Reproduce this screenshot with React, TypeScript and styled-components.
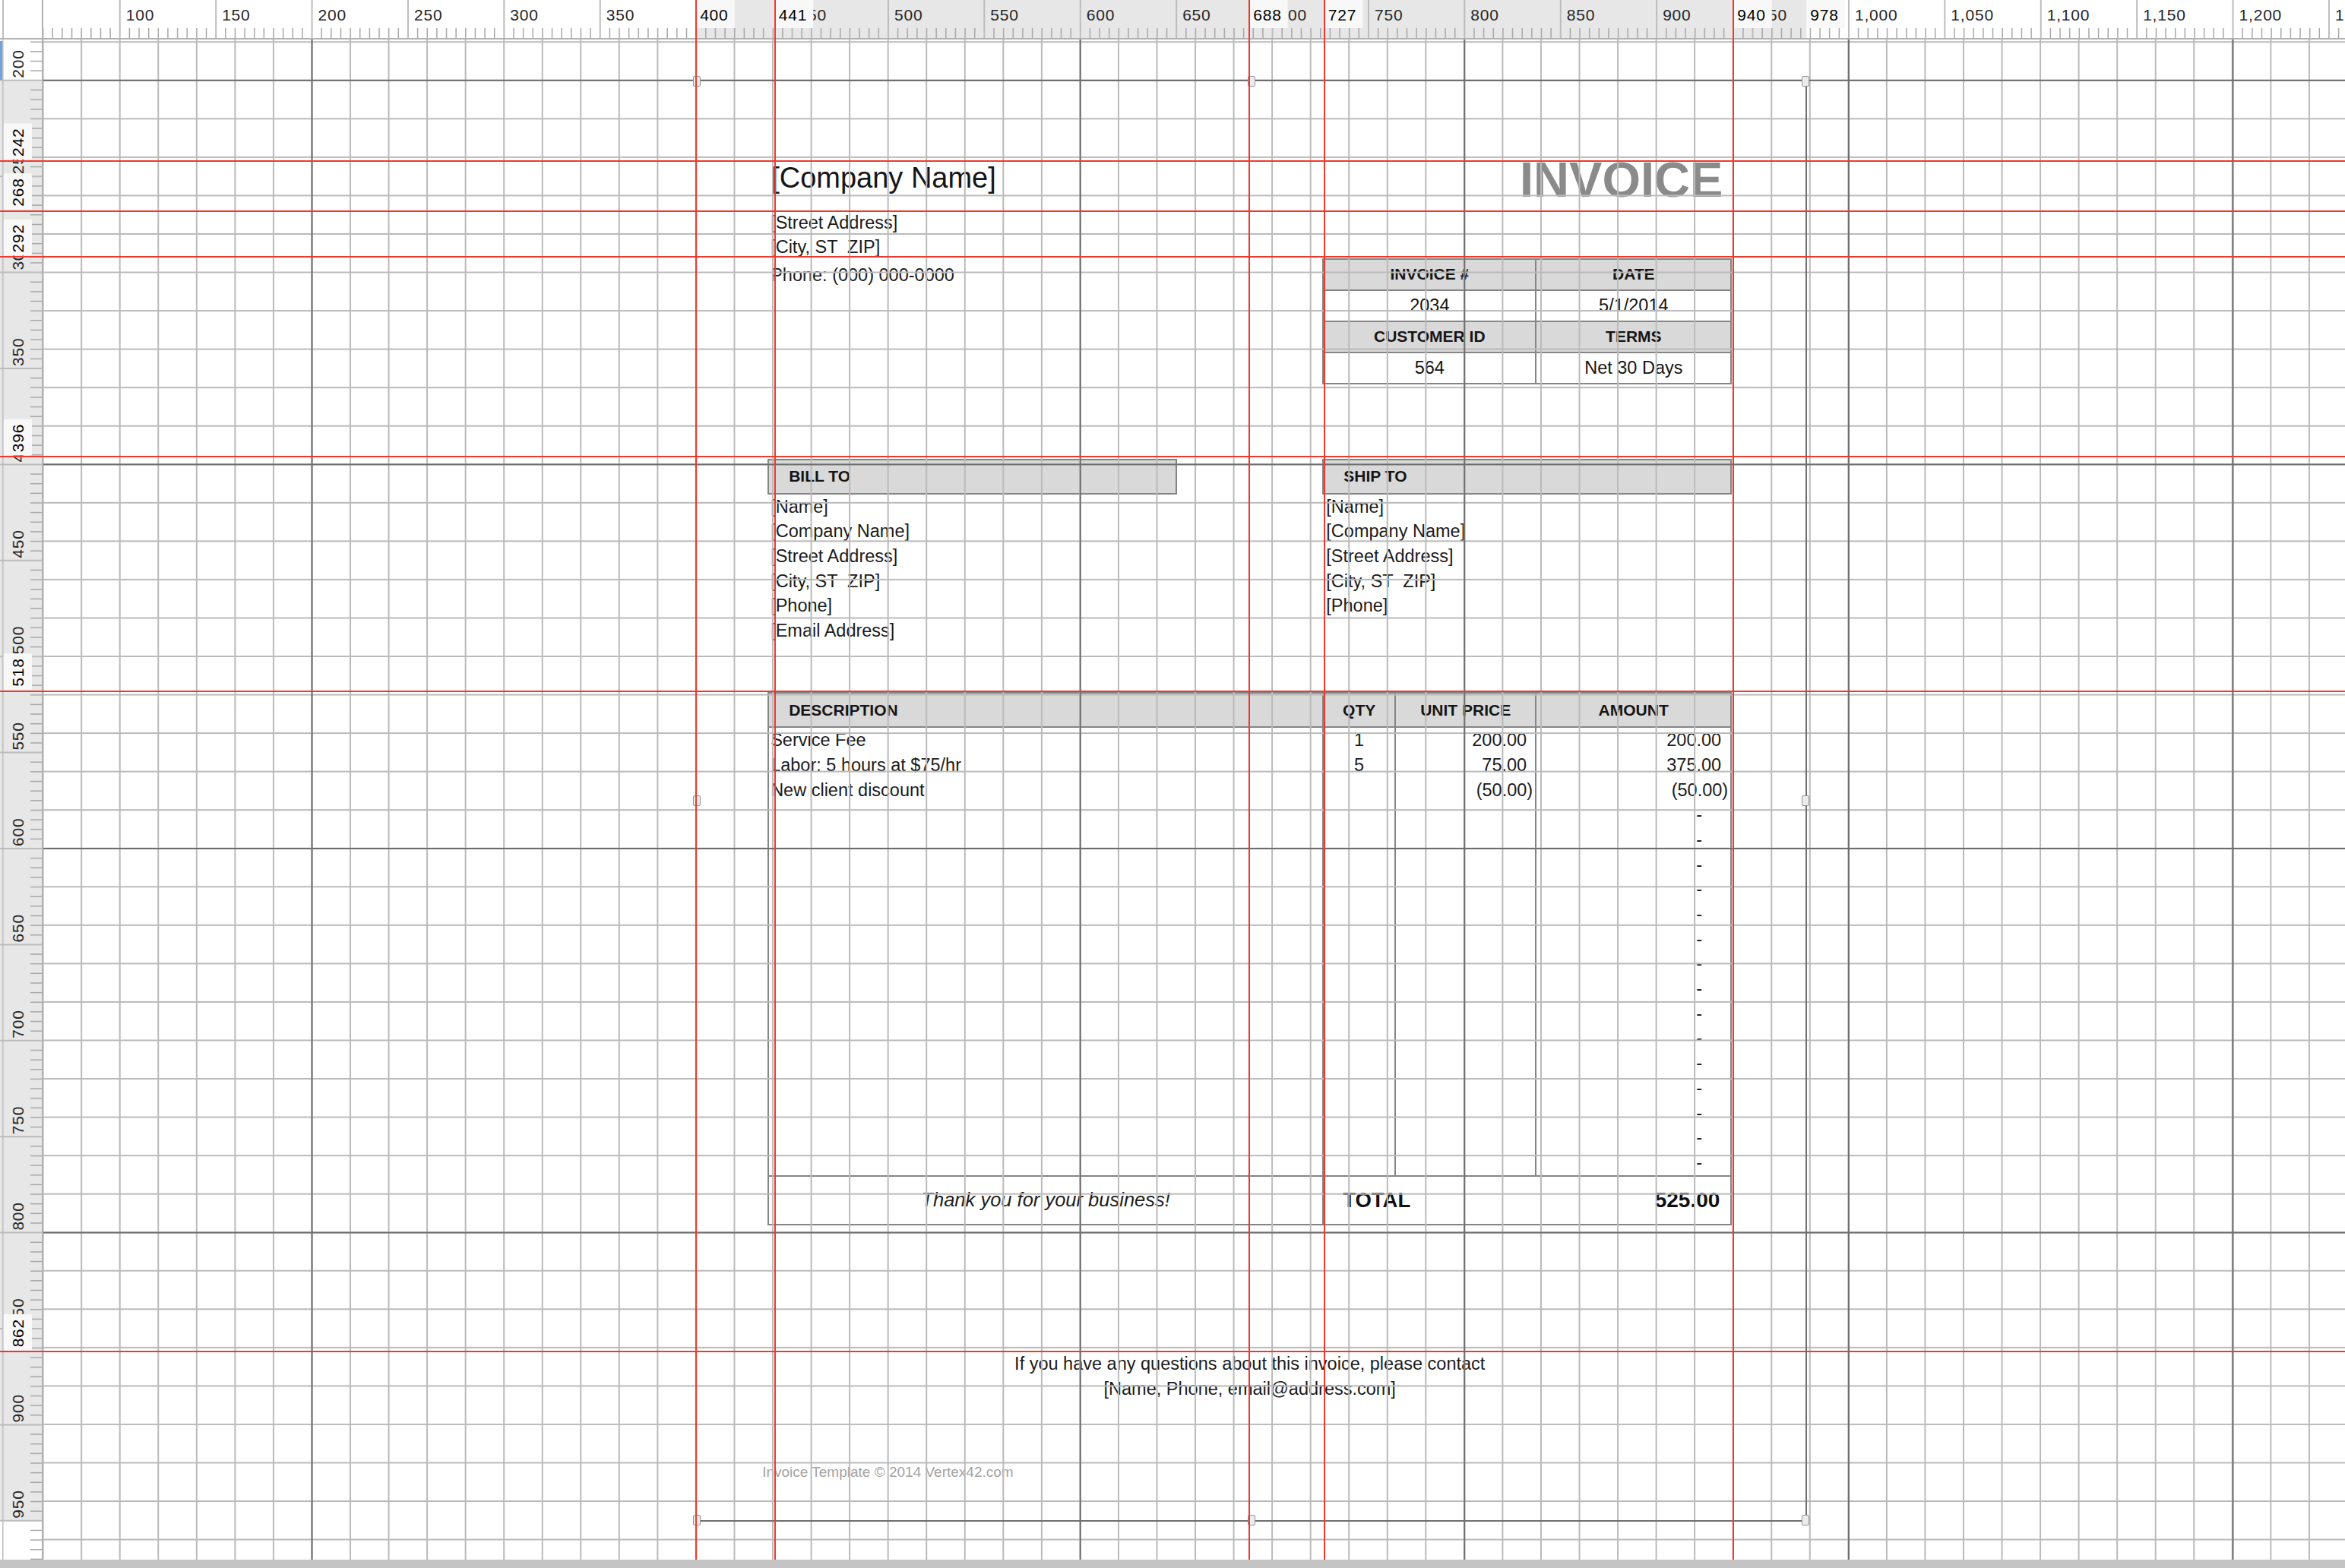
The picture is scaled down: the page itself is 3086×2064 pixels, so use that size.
import React from "react";
import styled, { createGlobalStyle } from "styled-components";

/* ---------- geometry of the design canvas ---------- */
const W = 3086;
const H = 2064;
const RULER_W = 57;
const RULER_H = 52;
const BAR_H = 11;
const S = 2.528; // screen px per ruler unit
const xu = (u: number) => 1019.8 + (u - 441) * S;
const yu = (u: number) => 212 + (u - 242) * S;
const mod = (a: number, m: number) => ((a % m) + m) % m;

const CANVAS_W = W - RULER_W;
const CANVAS_H = H - RULER_H - BAR_H;
const cx = (u: number) => xu(u) - RULER_W;
const cy = (u: number) => yu(u) - RULER_H;

const MINOR = 20 * S;
const MAJOR = 200 * S;
const minX = mod(cx(0) - 1, MINOR);
const majX = mod(cx(0) - 1, MAJOR);
const minY = mod(cy(0) - 1, MINOR);
const majY = mod(cy(0) - 1, MAJOR);

/* ruler label boxes (guides + selection extent) */
const V_MARKS = [400, 441, 688, 727, 940, 978];
const H_MARKS = [242, 268, 292, 396, 518, 862];
/* red guide lines actually drawn */
const V_GUIDES = [400, 441, 688, 727, 940];
const H_GUIDES = [242, 268, 292, 396, 518, 862];

const RED = "#f0392d";
const LINE = "#858585";
const HEAD_BG = "#d9d9d9";
const RULER_FONT = '"Liberation Sans", Arial, sans-serif';

const fmt = (u: number) => (u >= 1000 ? `${Math.floor(u / 1000)},${String(u % 1000).padStart(3, "0")}` : String(u));

/* ---------- global ---------- */
const GlobalStyle = createGlobalStyle`
  html, body { margin: 0; padding: 0; background: #ffffff; }
  body {
    width: ${W}px;
    height: ${H}px;
    overflow: hidden;
    font-family: "Liberation Sans", Arial, sans-serif;
  }
  #root { width: ${W}px; height: ${H}px; }
`;

/* ---------- window frame ---------- */
const Screen = styled.div`
  position: relative;
  width: ${W}px;
  height: ${H}px;
  display: grid;
  grid-template-columns: ${RULER_W}px 1fr;
  grid-template-rows: ${RULER_H}px 1fr ${BAR_H}px;
  overflow: hidden;
  background: #ffffff;
`;

const Corner = styled.div`
  box-sizing: border-box;
  border-right: 2px solid #b3b3b3;
  border-bottom: 2px solid #b3b3b3;
  background: linear-gradient(to right, transparent 3px, #bdbdbd 3px, #bdbdbd 4.5px, transparent 4.5px), #ffffff;
`;

const TopRuler = styled.div`
  overflow: hidden;
  background: #ffffff;
  & > svg { display: block; }
`;

const LeftRuler = styled.div`
  overflow: hidden;
  background: #ffffff;
  & > svg { display: block; }
`;

const Canvas = styled.main`
  position: relative;
  overflow: hidden;
  background: #ffffff;
`;

const BottomBar = styled.div`
  grid-column: 1 / -1;
  background: #c4c4c4;
`;

const GridOverlay = styled.div`
  position: absolute;
  inset: 0;
  pointer-events: none;
  background-image:
    linear-gradient(to right, #6d6d6d 0, #6d6d6d 2px, transparent 2px),
    linear-gradient(to bottom, #6d6d6d 0, #6d6d6d 2px, transparent 2px),
    linear-gradient(to right, #bababa 0, #bababa 2px, transparent 2px),
    linear-gradient(to bottom, #bababa 0, #bababa 2px, transparent 2px);
  background-size: ${MAJOR}px 100%, 100% ${MAJOR}px, ${MINOR}px 100%, 100% ${MINOR}px;
  background-position: ${majX}px 0, 0 ${majY}px, ${minX}px 0, 0 ${minY}px;
`;

const VGuide = styled.div<{ $x: number }>`
  position: absolute;
  top: 0;
  bottom: ${BAR_H}px;
  left: ${(p) => p.$x - 1}px;
  width: 2px;
  background: ${RED};
  pointer-events: none;
`;

const HGuide = styled.div<{ $y: number }>`
  position: absolute;
  left: 0;
  right: 0;
  top: ${(p) => p.$y - 1}px;
  height: 2px;
  background: ${RED};
  pointer-events: none;
`;

const Selection = styled.div`
  position: absolute;
  left: ${cx(400) - 1}px;
  top: ${cy(200) - 1}px;
  width: ${xu(978) - xu(400) + 2}px;
  height: ${yu(950) - yu(200) + 2}px;
  box-sizing: border-box;
  border: 2px solid #6f6f6f;
  pointer-events: none;
`;

const Handle = styled.span<{ $x: number; $y: number }>`
  position: absolute;
  left: ${(p) => p.$x}%;
  top: ${(p) => p.$y}%;
  width: 10px;
  height: 14px;
  box-sizing: border-box;
  transform: translate(-50%, -50%);
  background: #ececec;
  border: 1.5px solid #959595;
  border-radius: 2px;
`;

/* ---------- rulers (drawings) ---------- */
const TopRulerDrawing: React.FC = () => {
  const ticks: React.ReactNode[] = [];
  for (let u = 25; u <= 1265; u += 5) {
    const x = cx(u);
    if (x < -2 || x > CANVAS_W + 2) continue;
    if (u % 50 === 0) {
      ticks.push(<line key={`m${u}`} x1={x} x2={x} y1={0} y2={RULER_H} stroke="#bcbcbc" strokeWidth={2} />);
    } else {
      ticks.push(<line key={`t${u}`} x1={x} x2={x} y1={37} y2={RULER_H} stroke="#a8a8a8" strokeWidth={1.5} />);
    }
  }
  const labels: React.ReactNode[] = [];
  for (let u = 100; u <= 1250; u += 50) {
    labels.push(
      <text key={`l${u}`} x={cx(u) + 8} y={27} fill="#262626">
        {fmt(u)}
      </text>
    );
  }
  const boxes = V_MARKS.map((g) => {
    const x = cx(g);
    const t = String(g);
    const w = t.length * 12.5 + 12;
    return (
      <g key={`g${g}`}>
        <rect x={x + 1} y={0} width={w} height={37} fill="#f8f8f8" />
        <text x={x + 5} y={27} fill="#000000">
          {t}
        </text>
      </g>
    );
  });
  return (
    <svg width={CANVAS_W} height={RULER_H} fontFamily={RULER_FONT} fontSize={21} letterSpacing={0.8}>
      <rect x={cx(400)} y={0} width={cx(978) - cx(400)} height={RULER_H} fill="#e7e7e7" />
      {ticks}
      {labels}
      {boxes}
      <line x1={0} x2={CANVAS_W} y1={RULER_H - 1} y2={RULER_H - 1} stroke="#b2b2b2" strokeWidth={2} />
    </svg>
  );
};

const LeftRulerDrawing: React.FC = () => {
  const h = CANVAS_H;
  const ticks: React.ReactNode[] = [];
  for (let u = 160; u <= 1000; u += 5) {
    const y = cy(u);
    if (y < -2 || y > h + 2) continue;
    if (u % 50 === 0) {
      ticks.push(<line key={`m${u}`} x1={0} x2={RULER_W} y1={y} y2={y} stroke="#bcbcbc" strokeWidth={2} />);
    } else {
      ticks.push(<line key={`t${u}`} x1={40} x2={RULER_W} y1={y} y2={y} stroke="#a8a8a8" strokeWidth={1.5} />);
    }
  }
  const labels: React.ReactNode[] = [];
  for (let u = 200; u <= 950; u += 50) {
    const y = cy(u) - 3;
    labels.push(
      <text key={`l${u}`} x={31} y={y} transform={`rotate(-90 31 ${y})`} fill="#262626">
        {fmt(u)}
      </text>
    );
  }
  const boxes = H_MARKS.map((g) => {
    const y = cy(g);
    const t = String(g);
    const len = t.length * 12.5 + 10;
    const ty = y - 6;
    return (
      <g key={`g${g}`}>
        <rect x={4} y={y - 2 - len} width={38} height={len} fill="#f8f8f8" />
        <text x={31} y={ty} transform={`rotate(-90 31 ${ty})`} fill="#000000">
          {t}
        </text>
      </g>
    );
  });
  return (
    <svg width={RULER_W} height={h} fontFamily={RULER_FONT} fontSize={21} letterSpacing={0.8}>
      <rect x={0} y={cy(200)} width={RULER_W} height={cy(950) - cy(200)} fill="#e7e7e7" />
      {ticks}
      {labels}
      {boxes}
      <rect x={0} y={2} width={3} height={51} fill="#6fa2de" />
      <line x1={3.8} x2={3.8} y1={0} y2={h} stroke="#bdbdbd" strokeWidth={1.5} />
      <line x1={RULER_W - 1} x2={RULER_W - 1} y1={0} y2={h} stroke="#b2b2b2" strokeWidth={2} />
    </svg>
  );
};

/* ---------- invoice page ---------- */
const Page = styled.section`
  position: absolute;
  left: ${cx(400)}px;
  top: ${cy(200)}px;
  width: ${xu(978) - xu(400)}px;
  height: ${yu(950) - yu(200)}px;
  box-sizing: border-box;
  padding: 99px 98px 0 94px;
  display: flex;
  flex-direction: column;
  color: #1b1b1b;
  font-family: "Liberation Sans", Arial, sans-serif;
  font-size: 23.5px;
`;

const TopSection = styled.header`
  display: flex;
  justify-content: space-between;
  align-items: flex-start;
`;

const LeftHead = styled.div`
  display: flex;
  flex-direction: column;
`;

const CompanyName = styled.div`
  margin-top: 6px;
  padding-left: 5px;
  font-size: 38px;
  line-height: 46px;
  color: #161616;
`;

const Address = styled.div`
  margin-top: 20px;
  padding-left: 4px;
  display: flex;
  flex-direction: column;
`;

const Line = styled.div<{ $gap?: number }>`
  line-height: 32.6px;
  margin-top: ${(p) => p.$gap ?? 0}px;
  white-space: pre;
`;

const RightHead = styled.div`
  width: 539px;
  display: flex;
  flex-direction: column;
`;

const Title = styled.h1`
  margin: 0;
  font-size: 65px;
  line-height: 63px;
  font-weight: 700;
  text-align: right;
  padding-right: 12px;
  color: #8a8a8a;
`;

const InfoTable = styled.div`
  margin-top: 72px;
  display: grid;
  grid-template-columns: 278px 1fr;
  gap: 2px;
  background: ${LINE};
  border: 2px solid ${LINE};
`;

const InfoCell = styled.div<{ $head?: boolean }>`
  height: 39px;
  display: flex;
  align-items: center;
  justify-content: center;
  background: ${(p) => (p.$head ? HEAD_BG : "#ffffff")};
  font-size: ${(p) => (p.$head ? "21px" : "23.5px")};
  font-weight: ${(p) => (p.$head ? 700 : 400)};
  color: #151515;
`;

const Parties = styled.div`
  margin-top: 98px;
  display: flex;
  justify-content: space-between;
`;

const PartyBlock = styled.div`
  width: 539px;
  display: flex;
  flex-direction: column;
`;

const PartyHeader = styled.div`
  height: 47px;
  box-sizing: border-box;
  border: 2px solid ${LINE};
  background: ${HEAD_BG};
  display: flex;
  align-items: center;
  padding-left: 26px;
  font-size: 21px;
  font-weight: 700;
  color: #151515;
`;

const PartyLines = styled.div<{ $indent: number }>`
  padding-left: ${(p) => p.$indent}px;
  display: flex;
  flex-direction: column;
`;

const COLS = "730px 95px 185px 255px";

const ItemsTable = styled.div`
  margin-top: 65px;
  border: 2px solid ${LINE};
  display: flex;
  flex-direction: column;
`;

const HeadRow = styled.div`
  display: grid;
  grid-template-columns: ${COLS};
  height: 45px;
  box-sizing: border-box;
  border-bottom: 2px solid ${LINE};
  background: ${HEAD_BG};
`;

const HeadCell = styled.div<{ $start?: boolean }>`
  display: flex;
  align-items: center;
  justify-content: ${(p) => (p.$start ? "flex-start" : "center")};
  padding-left: ${(p) => (p.$start ? 26 : 0)}px;
  font-size: 21px;
  font-weight: 700;
  color: #151515;
  border-right: 2px solid ${LINE};
  &:last-child { border-right: none; }
`;

const BodyRow = styled.div`
  display: grid;
  grid-template-columns: ${COLS};
  height: 32.7px;
`;

const BodyCell = styled.div<{ $justify: string; $padL?: number; $padR?: number }>`
  display: flex;
  align-items: center;
  justify-content: ${(p) => p.$justify};
  padding-left: ${(p) => p.$padL ?? 0}px;
  padding-right: ${(p) => p.$padR ?? 0}px;
  white-space: nowrap;
  overflow: hidden;
  border-right: 2px solid ${LINE};
  &:last-child { border-right: none; }
`;

const TotalRow = styled.div`
  display: grid;
  grid-template-columns: 730px 1fr;
  height: 64px;
  box-sizing: border-box;
  border-top: 2px solid ${LINE};
`;

const ThanksCell = styled.div`
  display: flex;
  align-items: center;
  justify-content: center;
  border-right: 2px solid ${LINE};
  font-style: italic;
  font-size: 25.5px;
  color: #1e1e1e;
`;

const TotalCell = styled.div`
  display: flex;
  align-items: center;
  justify-content: space-between;
  padding: 0 14px 0 25px;
  font-weight: 700;
  color: #111111;
`;

const TotalLabel = styled.span`
  font-size: 27.5px;
`;

const TotalValue = styled.span`
  font-size: 28px;
`;

const Contact = styled.div`
  margin-top: 166px;
  text-align: center;
  line-height: 33px;
  color: #1b1b1b;
`;

const Copyright = styled.div`
  margin-top: 82px;
  margin-left: -7px;
  font-size: 19px;
  line-height: 22px;
  color: #a3a3a3;
`;

/* ---------- data ---------- */
type Kind = "pos" | "neg" | "zero";
type Money = { text: string; kind: Kind };
type Item = { desc: string; qty: string; unit?: Money; amount: Money };

const items: Item[] = [
  { desc: "Service Fee", qty: "1", unit: { text: "200.00", kind: "pos" }, amount: { text: "200.00", kind: "pos" } },
  { desc: "Labor: 5 hours at $75/hr", qty: "5", unit: { text: "75.00", kind: "pos" }, amount: { text: "375.00", kind: "pos" } },
  { desc: "New client discount", qty: "", unit: { text: "(50.00)", kind: "neg" }, amount: { text: "(50.00)", kind: "neg" } },
  ...Array.from({ length: 15 }, () => ({ desc: "", qty: "", amount: { text: "-", kind: "zero" as Kind } })),
];

const unitPad: Record<Kind, number> = { pos: 11, neg: 3, zero: 37 };
const amountPad: Record<Kind, number> = { pos: 12, neg: 3, zero: 37 };

const billTo = ["[Name]", "[Company Name]", "[Street Address]", "[City, ST  ZIP]", "[Phone]", "[Email Address]"];
const shipTo = ["[Name]", "[Company Name]", "[Street Address]", "[City, ST  ZIP]", "[Phone]"];

const handles: Array<[number, number]> = [
  [0, 0], [50, 0], [100, 0],
  [0, 50], [100, 50],
  [0, 100], [50, 100], [100, 100],
];

/* ---------- component ---------- */
export default function App() {
  return (
    <>
      <GlobalStyle />
      <Screen>
        <Corner />
        <TopRuler>
          <TopRulerDrawing />
        </TopRuler>
        <LeftRuler>
          <LeftRulerDrawing />
        </LeftRuler>
        <Canvas>
          <Page>
            <TopSection>
              <LeftHead>
                <CompanyName>[Company Name]</CompanyName>
                <Address>
                  <Line>[Street Address]</Line>
                  <Line>[City, ST  ZIP]</Line>
                  <Line $gap={4}>Phone: (000) 000-0000</Line>
                </Address>
              </LeftHead>
              <RightHead>
                <Title>INVOICE</Title>
                <InfoTable>
                  <InfoCell $head>INVOICE #</InfoCell>
                  <InfoCell $head>DATE</InfoCell>
                  <InfoCell>2034</InfoCell>
                  <InfoCell>5/1/2014</InfoCell>
                  <InfoCell $head>CUSTOMER ID</InfoCell>
                  <InfoCell $head>TERMS</InfoCell>
                  <InfoCell>564</InfoCell>
                  <InfoCell>Net 30 Days</InfoCell>
                </InfoTable>
              </RightHead>
            </TopSection>

            <Parties>
              <PartyBlock>
                <PartyHeader>BILL TO</PartyHeader>
                <PartyLines $indent={4}>
                  {billTo.map((t, i) => (
                    <Line key={i}>{t}</Line>
                  ))}
                </PartyLines>
              </PartyBlock>
              <PartyBlock>
                <PartyHeader>SHIP TO</PartyHeader>
                <PartyLines $indent={5}>
                  {shipTo.map((t, i) => (
                    <Line key={i}>{t}</Line>
                  ))}
                </PartyLines>
              </PartyBlock>
            </Parties>

            <ItemsTable>
              <HeadRow>
                <HeadCell $start>DESCRIPTION</HeadCell>
                <HeadCell>QTY</HeadCell>
                <HeadCell>UNIT PRICE</HeadCell>
                <HeadCell>AMOUNT</HeadCell>
              </HeadRow>
              {items.map((it, i) => (
                <BodyRow key={i}>
                  <BodyCell $justify="flex-start" $padL={2}>{it.desc}</BodyCell>
                  <BodyCell $justify="center">{it.qty}</BodyCell>
                  <BodyCell $justify="flex-end" $padR={it.unit ? unitPad[it.unit.kind] : 0}>
                    {it.unit ? it.unit.text : ""}
                  </BodyCell>
                  <BodyCell $justify="flex-end" $padR={amountPad[it.amount.kind]}>
                    {it.amount.text}
                  </BodyCell>
                </BodyRow>
              ))}
              <TotalRow>
                <ThanksCell>Thank you for your business!</ThanksCell>
                <TotalCell>
                  <TotalLabel>TOTAL</TotalLabel>
                  <TotalValue>525.00</TotalValue>
                </TotalCell>
              </TotalRow>
            </ItemsTable>

            <Contact>
              <div>If you have any questions about this invoice, please contact</div>
              <div>[Name, Phone, email@address.com]</div>
            </Contact>
            <Copyright>Invoice Template © 2014 Vertex42.com</Copyright>
          </Page>

          <GridOverlay />
          <Selection>
            {handles.map(([x, y], i) => (
              <Handle key={i} $x={x} $y={y} />
            ))}
          </Selection>
        </Canvas>
        <BottomBar />

        {V_GUIDES.map((g) => (
          <VGuide key={`v${g}`} $x={xu(g)} />
        ))}
        {H_GUIDES.map((g) => (
          <HGuide key={`h${g}`} $y={yu(g)} />
        ))}
      </Screen>
    </>
  );
}
